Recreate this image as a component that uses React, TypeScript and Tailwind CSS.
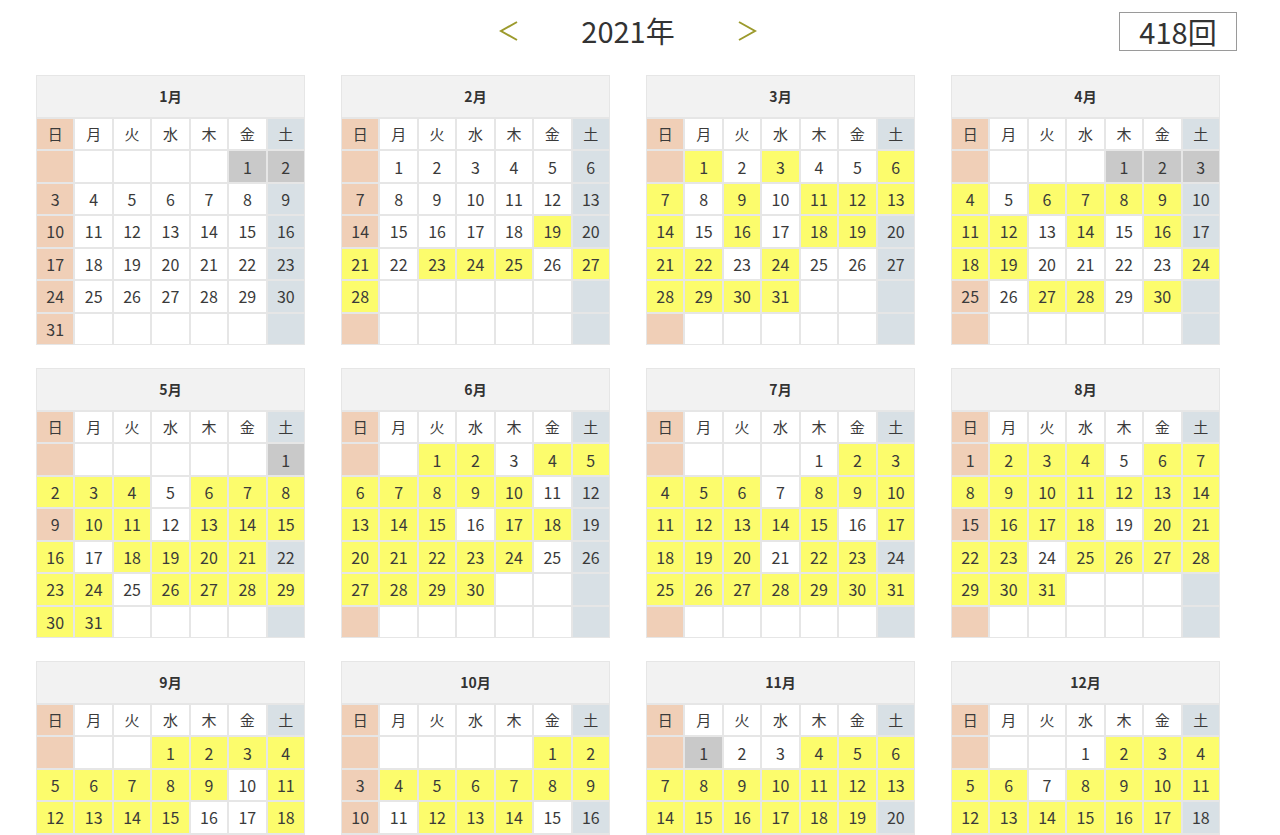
import React from 'react';

type Mark = { y: number[]; g: number[] };

// 2021 attendance marks per month (y = yellow, g = grey)
const MARKS: Mark[] = [
  { y: [], g: [1, 2] },
  { y: [19, 21, 23, 24, 25, 27, 28], g: [] },
  { y: [1, 3, 6, 7, 9, 11, 12, 13, 14, 16, 18, 19, 21, 22, 24, 28, 29, 30, 31], g: [] },
  { y: [4, 6, 7, 8, 9, 11, 12, 14, 16, 18, 19, 24, 27, 28, 30], g: [1, 2, 3] },
  { y: [2, 3, 4, 6, 7, 8, 10, 11, 13, 14, 15, 16, 18, 19, 20, 21, 23, 24, 26, 27, 28, 29, 30, 31], g: [1] },
  { y: [1, 2, 4, 5, 6, 7, 8, 9, 10, 13, 14, 15, 17, 18, 20, 21, 22, 23, 24, 27, 28, 29, 30], g: [] },
  { y: [2, 3, 4, 5, 6, 8, 9, 10, 11, 12, 13, 14, 15, 17, 18, 19, 20, 22, 23, 25, 26, 27, 28, 29, 30, 31], g: [] },
  { y: [2, 3, 4, 6, 7, 8, 9, 10, 11, 12, 13, 14, 16, 17, 18, 20, 21, 22, 23, 25, 26, 27, 28, 29, 30, 31], g: [] },
  { y: [1, 2, 3, 4, 5, 6, 7, 8, 9, 11, 12, 13, 14, 15, 18, 19, 20, 21, 22, 24, 25, 27, 28, 29], g: [] },
  { y: [1, 2, 4, 5, 6, 7, 8, 9, 12, 13, 14, 17, 18, 19, 20, 21, 23, 24, 25, 26, 27, 29, 30], g: [] },
  { y: [4, 5, 6, 7, 8, 9, 10, 11, 12, 13, 14, 15, 16, 17, 18, 19, 21, 22, 24, 25, 26, 28, 29, 30], g: [1] },
  { y: [2, 3, 4, 5, 6, 8, 9, 10, 11, 12, 13, 14, 15, 16, 17, 19, 20, 21, 22, 23, 24, 26, 27, 28], g: [] },
];

const WEEK = ['日', '月', '火', '水', '木', '金', '土'];

const colBg = (col: number) =>
  col === 0 ? 'bg-[#f0cfb7]' : col === 6 ? 'bg-[#d8e0e5]' : 'bg-white';

const Chevron = ({ dir }: { dir: 'left' | 'right' }) => (
  <svg width="20" height="22" viewBox="0 0 20 22" fill="none">
    <polyline
      points={dir === 'left' ? '18,2 2,11 18,20' : '2,2 18,11 2,20'}
      stroke="#9c9a2c"
      strokeWidth="2"
    />
  </svg>
);

const Month = ({ m }: { m: number }) => {
  const first = new Date(2021, m, 1).getDay();
  const days = new Date(2021, m + 1, 0).getDate();
  const mark = MARKS[m];
  const cells = Array.from({ length: 42 }, (_, i) => {
    const d = i - first + 1;
    return d >= 1 && d <= days ? d : null;
  });

  return (
    <div className="grid h-[270px] w-[269px] grid-cols-7 grid-rows-[41px_repeat(7,1fr)] gap-[2px] bg-[#e6e6e6] p-px">
      <div className="col-span-7 flex items-center justify-center bg-[#f2f2f2] text-[14px] font-bold text-[#333]">
        {m + 1}月
      </div>
      {WEEK.map((w, i) => (
        <div key={w} className={`flex items-center justify-center text-[15px] text-[#3a3a3a] ${colBg(i)}`}>
          {w}
        </div>
      ))}
      {cells.map((d, i) => {
        const col = i % 7;
        let bg = colBg(col);
        if (d && mark.g.includes(d)) bg = 'bg-[#c9c9c9]';
        else if (d && mark.y.includes(d)) bg = 'bg-[#fcfc6c]';
        return (
          <div key={i} className={`flex items-center justify-center text-[16px] text-[#3a3a3a] ${bg}`}>
            {d ?? ''}
          </div>
        );
      })}
    </div>
  );
};

export default function App() {
  return (
    <div className="min-h-screen bg-white font-['Noto_Sans_CJK_JP','Noto_Sans',sans-serif] text-[#333]">
      <div className="ml-[36px] w-[1184px]">
        <div className="relative flex h-[75px] items-center justify-center gap-[62px] pb-[14px]">
          <Chevron dir="left" />
          <span className="text-[29px] leading-none">2021年</span>
          <Chevron dir="right" />
          <div className="absolute right-[-17px] top-[12px] flex h-[39px] w-[118px] items-center justify-center border border-[#9a9a9a] text-[29px] leading-none">
            418回
          </div>
        </div>
        <div className="grid grid-cols-4 gap-x-[36px] gap-y-[23px] pb-10">
          {Array.from({ length: 12 }, (_, m) => (
            <Month key={m} m={m} />
          ))}
        </div>
      </div>
    </div>
  );
}
